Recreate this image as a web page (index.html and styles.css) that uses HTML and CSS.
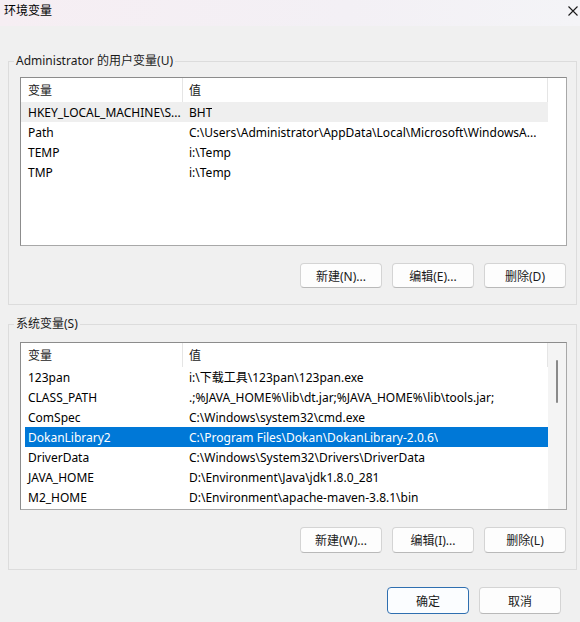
FILE: index.html
```html
<!DOCTYPE html>
<html>
<head>
    <meta charset="utf-8">
    <link rel="stylesheet" href="styles.css">
</head>
<body>
    <div class="dialog">
        <div class="titlebar">
            <span class="title">环境变量</span>
            <svg class="close" width="10" height="10" viewBox="0 0 10 10">
                <path d="M0.5 0.5 L9.5 9.5 M9.5 0.5 L0.5 9.5" stroke="#1a1a1a" stroke-width="1.1" fill="none"/>
            </svg>
        </div>

        <fieldset class="group group-user">
            <legend>Administrator 的用户变量(U)</legend>
            <div class="list list-user">
                <div class="list-main">
                    <div class="list-head">
                        <div class="col-name">变量</div>
                        <div class="col-value">值</div>
                    </div>
                    <div class="row row-inactive">
                        <div class="col-name">HKEY_LOCAL_MACHINE\S...</div>
                        <div class="col-value">BHT</div>
                    </div>
                    <div class="row">
                        <div class="col-name">Path</div>
                        <div class="col-value">C:\Users\Administrator\AppData\Local\Microsoft\WindowsA...</div>
                    </div>
                    <div class="row">
                        <div class="col-name">TEMP</div>
                        <div class="col-value">i:\Temp</div>
                    </div>
                    <div class="row">
                        <div class="col-name">TMP</div>
                        <div class="col-value">i:\Temp</div>
                    </div>
                </div>
            </div>
            <div class="actions">
                <button class="btn">新建(N)...</button>
                <button class="btn">编辑(E)...</button>
                <button class="btn">删除(D)</button>
            </div>
        </fieldset>

        <fieldset class="group group-system">
            <legend>系统变量(S)</legend>
            <div class="list list-system">
                <div class="list-main">
                    <div class="list-head">
                        <div class="col-name">变量</div>
                        <div class="col-value">值</div>
                    </div>
                    <div class="row">
                        <div class="col-name">123pan</div>
                        <div class="col-value">i:\下载工具\123pan\123pan.exe</div>
                    </div>
                    <div class="row">
                        <div class="col-name">CLASS_PATH</div>
                        <div class="col-value">.;%JAVA_HOME%\lib\dt.jar;%JAVA_HOME%\lib\tools.jar;</div>
                    </div>
                    <div class="row">
                        <div class="col-name">ComSpec</div>
                        <div class="col-value">C:\Windows\system32\cmd.exe</div>
                    </div>
                    <div class="row row-selected">
                        <div class="col-name">DokanLibrary2</div>
                        <div class="col-value">C:\Program Files\Dokan\DokanLibrary-2.0.6\</div>
                    </div>
                    <div class="row">
                        <div class="col-name">DriverData</div>
                        <div class="col-value">C:\Windows\System32\Drivers\DriverData</div>
                    </div>
                    <div class="row">
                        <div class="col-name">JAVA_HOME</div>
                        <div class="col-value">D:\Environment\Java\jdk1.8.0_281</div>
                    </div>
                    <div class="row">
                        <div class="col-name">M2_HOME</div>
                        <div class="col-value">D:\Environment\apache-maven-3.8.1\bin</div>
                    </div>
                </div>
                <div class="scrollbar">
                    <div class="scroll-thumb"></div>
                </div>
            </div>
            <div class="actions">
                <button class="btn">新建(W)...</button>
                <button class="btn">编辑(I)...</button>
                <button class="btn">删除(L)</button>
            </div>
        </fieldset>

        <div class="footer">
            <button class="btn btn-default">确定</button>
            <button class="btn">取消</button>
        </div>
    </div>
</body>
</html>
```

FILE: styles.css
```css
body {
    margin: 0;
    padding: 0;
    font-family: "Noto Sans", "Noto Sans CJK SC", sans-serif;
    font-size: 12px;
    color: #000;
    background: #f0f0f0;
}
.dialog {
    width: 580px;
    height: 622px;
    background: #f0f0f0;
    overflow: hidden;
}
.titlebar {
    height: 26px;
    display: flex;
    align-items: center;
    justify-content: space-between;
    padding: 0 2px 0 4px;
    box-sizing: border-box;
    background: linear-gradient(90deg, #f6eef3 0%, #f3f0f5 60%, #f4f4f7 100%);
}
.title {
    font-size: 12px;
    line-height: 16px;
    margin-top: -4px;
}
.close {
    margin-top: -4px;
}

/* group boxes */
.group {
    margin: 27px 3px 0 8px;
    padding: 8px 9px 16px 11px;
    border: 1px solid #dcdcdc;
    border-radius: 0;
    min-width: 0;
}
.group legend {
    margin-left: -6px;
    padding: 0 2px;
    line-height: 16px;
    font-size: 12px;
    color: #1a1a1a;
}
.group-system {
    margin-top: 11px;
    padding-top: 10px;
}

/* list views */
.list {
    display: flex;
    background: #fff;
    border: 1px solid #8c8c8c;
    border-right-color: #a8a8a8;
    border-bottom-color: #a8a8a8;
    box-sizing: border-box;
}
.list-user {
    height: 169px;
}
.list-system {
    height: 168px;
}
.list-main {
    width: 527px;
    overflow: hidden;
}
.list-head {
    display: flex;
    height: 24px;
    align-items: center;
    border-right: 1px solid #e5e5e5;
    color: #1a1a1a;
}
.list-head .col-name {
    border-right: 1px solid #e5e5e5;
    height: 100%;
    display: flex;
    align-items: center;
}
.row {
    display: flex;
    height: 20px;
    align-items: center;
    white-space: nowrap;
}
.col-name {
    box-sizing: border-box;
    width: 162px;
    padding-left: 7px;
    flex-shrink: 0;
    overflow: hidden;
}
.col-value {
    padding-left: 6px;
    overflow: hidden;
}
.row-inactive {
    background: #efefef;
}
.row-selected {
    background: #0078d7;
    color: #fff;
    margin-left: 4px;
}
.row-selected .col-name {
    width: 158px;
    padding-left: 3px;
}
.scrollbar {
    flex: 1;
    background: #f4f4f4;
    display: flex;
    justify-content: center;
    padding-top: 17px;
}
.scroll-thumb {
    width: 2px;
    height: 43px;
    background: #8a8a8a;
    border-radius: 1px;
}

/* buttons */
.actions {
    display: flex;
    justify-content: flex-end;
    gap: 10px;
    margin-top: 17px;
    padding-right: 1px;
}
.btn {
    width: 82px;
    height: 25px;
    padding: 0;
    font-family: inherit;
    font-size: 12px;
    color: #1a1a1a;
    background: #fdfdfd;
    border: 1px solid #d4d4d4;
    border-bottom-color: #b9b9b9;
    border-radius: 4px;
}
.group-system .btn {
    height: 26px;
}
.footer {
    display: flex;
    justify-content: flex-end;
    gap: 10px;
    margin-top: 17px;
    padding-right: 19px;
}
.footer .btn {
    height: 27px;
}
.btn-default {
    border: 1px solid #2f6fb0;
    background: #fbfdff;
}
```
